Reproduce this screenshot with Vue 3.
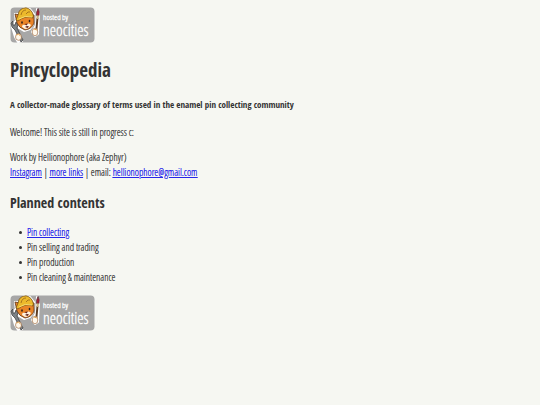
<script setup>
const contents = [
  { text: 'Pin collecting', href: '#pin-collecting' },
  { text: 'Pin selling and trading' },
  { text: 'Pin production' },
  { text: 'Pin cleaning & maintenance' }
]
const badges = ['top', 'bottom']
</script>

<template>
  <main class="page">
    <template v-for="place in badges" :key="place">
      <template v-if="place === 'bottom'">
        <h1>Pincyclopedia</h1>
        <h4>A collector-made glossary of terms used in the enamel pin collecting community</h4>
        <p>Welcome! This site is still in progress c:</p>
        <p>
          Work by Hellionophore (aka Zephyr)<br />
          <a href="#instagram">Instagram</a> | <a href="#links">more links</a> | email:
          <a href="mailto:hellionophore@gmail.com">hellionophore@gmail.com</a>
        </p>
        <h2>Planned contents</h2>
        <ul>
          <li v-for="item in contents" :key="item.text">
            <a v-if="item.href" :href="item.href">{{ item.text }}</a>
            <template v-else>{{ item.text }}</template>
          </li>
        </ul>
      </template>
      <a class="badge" href="https://neocities.org" aria-label="Hosted by Neocities">
        <svg viewBox="0 0 85 36" width="85" height="36">
          <rect x="0.5" y="0.5" width="84" height="35" rx="4" fill="#a7a7a7" />
          <!-- white sticker edge behind the cat -->
          <g fill="#fff" stroke="#fff" stroke-width="2" stroke-linejoin="round">
            <path d="M5 7 L9 7 L14 1 L20 2 L24 7 L23 18 L20 22 L14 24 L9 21 L6 16 Z" />
            <path d="M2 16 L5 15 L7 25 L11 30 L12 34 L8 35 L5 30 L2 20 Z" />
            <path d="M27 2 L29 6 L28 27 L25 29 L22 25 L26 18 Z" />
          </g>
          <!-- wrench -->
          <path d="M1 16 L3 14 L3 18 L5 18 L6 15 L8 18 L7 21 L13 33 L11 35 L5 23 L2 20 Z" fill="#7d8286" stroke="#333" stroke-width="0.7" />
          <!-- brush -->
          <path d="M27.5 11 L26 27" stroke="#5c3c22" stroke-width="2" />
          <path d="M28 1.5 Q26 5 26.5 8.5 L29 8.5 Q30 5 28 1.5 Z" fill="#a72335" stroke="#49242a" stroke-width="0.7" />
          <path d="M26.5 8.5 L29 8.5 L28.5 12 L26.5 12 Z" fill="#c9b080" />
          <!-- head -->
          <path d="M5 7 L10 8 L20 8 L24 8 L24 16 Q22 22 15 23 Q9 21 7 16 Z" fill="#e98427" stroke="#5b3419" stroke-width="0.8" />
          <path d="M12 20 Q12 17 15 18 Q19 15 21 18 Q19 22 15 22 Z" fill="#fff2df" />
          <path d="M14.5 17 L18 16.5 L16.5 18.5 Z M15 20 Q17 18.5 19 19.5 L17.5 21 Z" fill="#64231f" />
          <ellipse cx="12" cy="15.5" rx="0.8" ry="1.3" fill="#2f2019" />
          <ellipse cx="19.5" cy="14" rx="0.8" ry="1.3" fill="#2f2019" />
          <!-- hard hat -->
          <path d="M8 8 Q9 1 16 0.8 Q22 2 23.5 9 L23 11 Q15 8 8 14 L6 13 Z" fill="#ecb92c" stroke="#76511b" stroke-width="0.8" />
          <path d="M11 8 Q12 3 16 3 M16 7 Q18 4 20 5" fill="none" stroke="#a9761d" stroke-width="1" />
          <path d="M9 12 Q15 8 22 10" fill="none" stroke="#f9df71" stroke-width="1" />
          <!-- paws -->
          <ellipse cx="8.5" cy="30" rx="3" ry="3.3" fill="#fff8ec" stroke="#965e32" stroke-width="0.6" />
          <ellipse cx="25" cy="25" rx="2.8" ry="3.8" fill="#fff8ec" stroke="#965e32" stroke-width="0.6" />
          <path d="M6.5 28 Q8.5 26 10.5 29 M24 22 L27 23" fill="none" stroke="#e4a650" stroke-width="1" />
          <text x="33" y="13" font-size="8">hosted by</text>
          <text x="33" y="29" font-size="16">neocities</text>
        </svg>
      </a>
    </template>
  </main>
</template>

<style>
body {
  margin: 0;
  background: #f6f7f2;
}
</style>

<style scoped>
.page {
  padding: 7px 10px;
  color: #444;
  font-family: 'Open Sans Condensed Light', 'Open Sans Condensed', 'Roboto Condensed', sans-serif;
  font-size: 10px;
  font-weight: 300;
  line-height: 15px;
}

p,
ul {
  text-shadow: 0 0 0 currentColor;
}

h1,
h2,
h4,
p,
ul {
  margin: 0 0 10px;
}

h1,
h2,
h4 {
  color: #333;
  font-family: 'Open Sans Condensed', 'Roboto Condensed', sans-serif;
  font-weight: 700;
}

h1 {
  margin: 12px 0;
  font-size: 19px;
  line-height: 30px;
}

h2 {
  margin: 12px 0;
  font-size: 14px;
  line-height: 21px;
}

h4 {
  margin-bottom: 13px;
  font-size: 9px;
}

ul {
  padding-left: 9px;
  list-style: none;
}

li {
  display: flex;
  align-items: center;
  gap: 5px;
}

li::before {
  content: '';
  width: 3px;
  height: 3px;
  border-radius: 50%;
  background: #333;
}

a {
  color: #2626ea;
}

.badge {
  display: block;
  width: max-content;
}

.badge svg {
  display: block;
}

.badge text {
  fill: #fff;
  stroke: #fff;
  stroke-width: 0.3;
}
</style>
